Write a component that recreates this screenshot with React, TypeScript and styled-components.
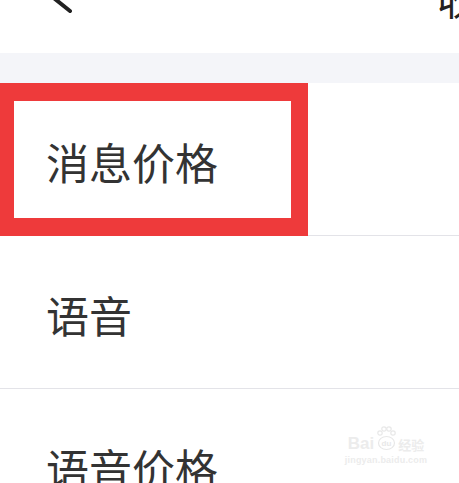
import React from "react";
import styled, { createGlobalStyle } from "styled-components";

const Global = createGlobalStyle`
  html, body { margin: 0; padding: 0; background: #ffffff; overflow: hidden; }
  body { font-family: "Noto Sans CJK SC", "Noto Sans", sans-serif; }
`;

const Page = styled.div`
  width: 459px;
  height: 483px;
  overflow: hidden;
  position: relative;
  background: #ffffff;
`;

const Header = styled.header`
  height: 116px;
  margin-top: -63px;
  display: flex;
  align-items: center;
  padding-left: 44px;
  background: #ffffff;
`;

const Back = styled.svg`
  width: 30px;
  height: 40px;
  display: block;
`;

const Title = styled.div`
  margin-left: auto;
  width: 22px;
  white-space: nowrap;
  font-size: 40px;
  color: #222222;
  line-height: 1;
  margin-top: 6px;
`;

const Band = styled.div`
  height: 30px;
  background: #f4f5f9;
`;

const List = styled.div`
  display: flex;
  flex-direction: column;
`;

const Row = styled.div`
  position: relative;
  height: 152px;
  border-bottom: 1px solid #e3e3e8;
  display: flex;
  align-items: center;
  padding-left: 46px;
  font-size: 43px;
  color: #333333;
`;

const RowText = styled.span<{ $shift?: number }>`
  position: relative;
  top: ${(p) => p.$shift ?? 0}px;
`;

const Highlight = styled.div`
  position: absolute;
  left: 0;
  top: 0;
  width: 308px;
  height: 153px;
  box-sizing: border-box;
  border-style: solid;
  border-color: #ee3a3b;
  border-width: 18px 17px 18px 14px;
  pointer-events: none;
`;

const Watermark = styled.div`
  position: absolute;
  left: 340px;
  top: 426px;
  width: 92px;
  display: flex;
  flex-direction: column;
  align-items: center;
  color: #ececec;
  pointer-events: none;
`;

const MarkTop = styled.div`
  display: flex;
  align-items: flex-end;
  gap: 2px;
  font-family: "Liberation Sans", Arial, sans-serif;
  font-weight: 700;
  font-size: 17px;
  line-height: 1;
`;

const MarkCn = styled.span`
  font-family: "Noto Sans CJK SC", sans-serif;
  font-size: 13px;
  font-weight: 700;
  margin-bottom: 1px;
`;

const MarkUrl = styled.div`
  font-family: "Liberation Sans", Arial, sans-serif;
  font-size: 9px;
  font-weight: 700;
  margin-top: 3px;
  letter-spacing: 0.2px;
`;

export default function App() {
  return (
    <>
      <Global />
      <Page>
        <Header>
          <Back viewBox="0 0 30 40">
            <polyline
              points="26,4 6,20 26,36"
              fill="none"
              stroke="#222222"
              strokeWidth="4"
              strokeLinecap="round"
              strokeLinejoin="round"
            />
          </Back>
          <Title>收费设置</Title>
        </Header>
        <Band />
        <List>
          <Row>
            <RowText $shift={2}>消息价格</RowText>
            <Highlight />
          </Row>
          <Row>
            <RowText $shift={2}>语音</RowText>
          </Row>
          <Row>
            <RowText $shift={2}>语音价格</RowText>
          </Row>
        </List>
        <Watermark>
          <MarkTop>
            <span>Bai</span>
            <svg width="20" height="26" viewBox="0 0 20 26">
              <circle cx="4" cy="7" r="2.2" fill="none" stroke="#e8e8e8" strokeWidth="1.2" />
              <circle cx="8" cy="3" r="2.2" fill="none" stroke="#e8e8e8" strokeWidth="1.2" />
              <circle cx="13" cy="3" r="2.2" fill="none" stroke="#e8e8e8" strokeWidth="1.2" />
              <circle cx="17" cy="7" r="2.2" fill="none" stroke="#e8e8e8" strokeWidth="1.2" />
              <ellipse cx="10.5" cy="17" rx="8" ry="6.5" fill="none" stroke="#e8e8e8" strokeWidth="1.2" />
              <text x="10.5" y="20" fontSize="8" textAnchor="middle" fill="#e8e8e8" fontFamily="Liberation Sans" fontWeight="700">du</text>
            </svg>
            <MarkCn>经验</MarkCn>
          </MarkTop>
          <MarkUrl>jingyan.baidu.com</MarkUrl>
        </Watermark>
      </Page>
    </>
  );
}
